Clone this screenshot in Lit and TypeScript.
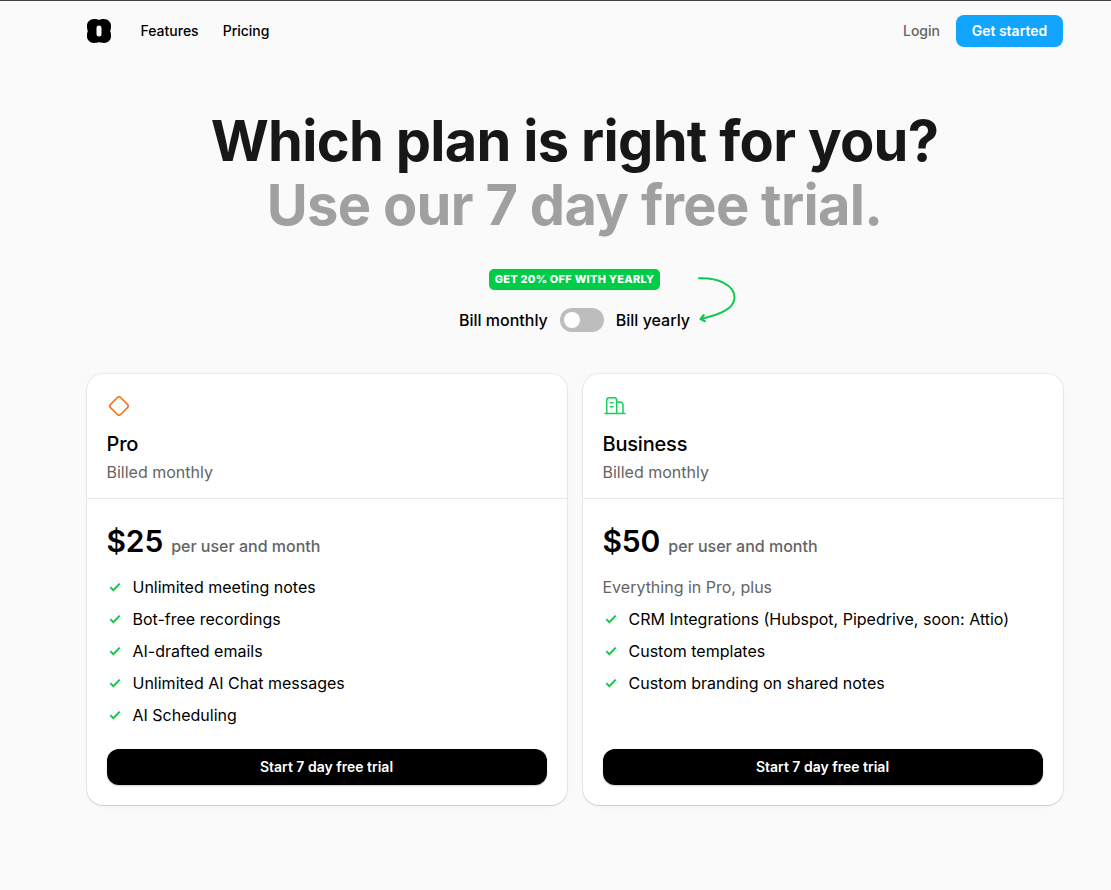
import { LitElement, html, css, svg, nothing } from "lit";
import { customElement, property, state } from "lit/decorators.js";

interface Plan {
  name: string;
  icon: "diamond" | "building";
  price: string;
  intro?: string;
  features: string[];
}

const plans: Plan[] = [
  {
    name: "Pro",
    icon: "diamond",
    price: "$25",
    features: [
      "Unlimited meeting notes",
      "Bot-free recordings",
      "AI-drafted emails",
      "Unlimited AI Chat messages",
      "AI Scheduling",
    ],
  },
  {
    name: "Business",
    icon: "building",
    price: "$50",
    intro: "Everything in Pro, plus",
    features: [
      "CRM Integrations (Hubspot, Pipedrive, soon: Attio)",
      "Custom templates",
      "Custom branding on shared notes",
    ],
  },
];

const icons = {
  diamond: svg`<rect x="4.8" y="4.8" width="14.4" height="14.4" rx="2.6" transform="rotate(45 12 12)" />`,
  building: svg`<path d="M2 19.500h20M3.700 19.500V6.200q0-2.500 2.500-2.500h5q2.500 0 2.500 2.500v13.300M13.700 8h3q3.300 0 3.300 3.200v8.300M7.400 8.800h2.600M7.400 12.700h2.600" />`,
};

@customElement("plan-card")
class PlanCard extends LitElement {
  static styles = css`
    :host {
      display: flex;
      flex-direction: column;
      background: #fff;
      border-radius: 16px;
      box-shadow: 0 0 0 1px rgba(0, 0, 0, 0.06), 0 1px 1px rgba(0, 0, 0, 0.1),
        0 2px 4px rgba(0, 0, 0, 0.03);
    }
    .head {
      padding: 20px 20px 13px;
      border-bottom: 1px solid #e8e8e8;
    }
    .icon {
      display: block;
      width: 24px;
      height: 24px;
      fill: none;
      stroke-width: 1.5;
      stroke-linecap: round;
      stroke-linejoin: round;
    }
    .diamond {
      stroke: #ff6600;
    }
    .building {
      stroke: #14cf58;
    }
    h2 {
      margin: 12px 0 0;
      font-size: 20px;
      font-weight: 500;
      line-height: 28px;
      letter-spacing: -0.01em;
    }
    .period {
      margin: 2px 0 0;
      color: #646464;
      line-height: 25px;
    }
    .body {
      display: flex;
      flex-direction: column;
      flex: 1;
      padding: 22px 20px 20px;
    }
    .price {
      display: flex;
      align-items: baseline;
      gap: 8px;
      height: 50px;
      line-height: 41px;
    }
    .amount {
      font-size: 30px;
      font-weight: 600;
      letter-spacing: -0.005em;
    }
    .unit {
      color: #646464;
      font-weight: 500;
    }
    ul {
      margin: 0;
      padding: 0;
      list-style: none;
    }
    li,
    .intro {
      display: flex;
      align-items: center;
      gap: 10px;
      height: 32px;
    }
    .intro {
      color: #646464;
    }
    .check {
      width: 16px;
      height: 16px;
      fill: none;
      stroke: #12c750;
      stroke-width: 2;
    }
    button {
      height: 36px;
      margin-top: auto;
      padding: 0 0 2px;
      border: 0;
      border-radius: 12px;
      background: #000;
      color: #fff;
      font: inherit;
      font-size: 14px;
      font-weight: 600;
      box-shadow: 0 1px 2px rgba(0, 0, 0, 0.2);
    }
  `;

  @property({ attribute: false }) plan!: Plan;
  @property({ type: Boolean }) yearly = false;

  render() {
    const { name, icon, price, intro, features } = this.plan;
    return html`
      <div class="head">
        <svg class="icon ${icon}" viewBox="0 0 24 24">${icons[icon]}</svg>
        <h2>${name}</h2>
        <p class="period">Billed ${this.yearly ? "yearly" : "monthly"}</p>
      </div>
      <div class="body">
        <div class="price">
          <span class="amount">${price}</span>
          <span class="unit">per user and month</span>
        </div>
        ${intro ? html`<div class="intro">${intro}</div>` : nothing}
        <ul>
          ${features.map(
            (feature) => html`
              <li>
                <svg class="check" viewBox="0 0 16 16">
                  <path d="M3.3 8.2L6.4 11.2L12.8 4.6" />
                </svg>
                <span>${feature}</span>
              </li>
            `
          )}
        </ul>
        <button>Start 7 day free trial</button>
      </div>
    `;
  }
}

@customElement("app-root")
class AppRoot extends LitElement {
  static styles = css`
    :host {
      display: block;
      box-sizing: border-box;
      height: 890px;
      padding: 0 48.5px 0 86.5px;
      border-top: 1px solid #3c4444;
      background: #fafafa;
      color: #000;
      font-family: Inter, sans-serif;
      font-size: 16px;
    }
    header {
      display: flex;
      align-items: center;
      height: 60px;
      margin-right: -0.5px;
      font-size: 14px;
      font-weight: 500;
    }
    .logo {
      width: 24px;
      height: 24px;
      margin-right: 30px;
    }
    nav {
      display: flex;
      flex: 1;
      gap: 24px;
      padding-bottom: 2px;
    }
    .login {
      margin-right: 16px;
      padding-bottom: 2px;
      color: #646464;
    }
    .start {
      width: 107px;
      height: 32px;
      padding: 0 0 2px;
      border: 0;
      border-radius: 8px;
      background: #12a5ff;
      color: #fff;
      font: inherit;
      font-weight: 600;
    }
    h1 {
      margin: 48px 0 0;
      color: #171717;
      font-size: 56px;
      font-weight: 700;
      line-height: 64px;
      letter-spacing: -0.7px;
      text-align: center;
    }
    h1 span {
      display: block;
      color: #a0a0a0;
    }
    .billing {
      display: flex;
      flex-direction: column;
      align-items: center;
      margin-top: 32px;
    }
    .offer {
      height: 21px;
      padding: 0 6px;
      border-radius: 5px;
      background: #00cc47;
      color: #fff;
      font-size: 11px;
      font-weight: 800;
      line-height: 21px;
      letter-spacing: 0.25px;
    }
    .choice {
      position: relative;
      display: flex;
      align-items: center;
      gap: 12px;
      height: 24px;
      margin-top: 18px;
      font-weight: 500;
    }
    .switch {
      display: flex;
      width: 44px;
      height: 24px;
      padding: 4px;
      box-sizing: border-box;
      border: 0;
      border-radius: 12px;
      background: #bdbdbd;
    }
    .switch.on {
      justify-content: flex-end;
      background: #00cc47;
    }
    .knob {
      width: 16px;
      height: 16px;
      border-radius: 50%;
      background: #fff;
    }
    .arrow {
      position: absolute;
      top: -38px;
      left: 100%;
      width: 50px;
      height: 56px;
      fill: none;
      stroke: #0acb4d;
      stroke-width: 2;
      stroke-linecap: round;
      stroke-linejoin: round;
    }
    .plans {
      display: grid;
      grid-template-columns: 1fr 1fr;
      gap: 16px;
      height: 431px;
      margin-top: 42px;
    }
  `;

  @state() private yearly = false;

  private toggle() {
    this.yearly = !this.yearly;
  }

  render() {
    return html`
      <header>
        <svg class="logo" viewBox="0 0 24 24">
          <path
            fill-rule="evenodd"
            d="M7 0C9 0 10.700 0.200 12 0.900C13.300 0.200 15 0 17 0C21 0 24 3 24 6.500C24 8.600 23.900 10.500 23.200 12C23.900 13.500 24 15.400 24 17.500C24 21 21 24 17 24C15 24 13.300 23.800 12 23.100C10.700 23.800 9 24 7 24C3 24 0 21 0 17.500C0 15.400 0.100 13.500 0.800 12C0.100 10.500 0 8.600 0 6.500C0 3 3 0 7 0ZM12 6.500A2.500 2.500 0 0 0 9.500 9V15A2.500 2.500 0 0 0 14.500 15V9A2.500 2.500 0 0 0 12 6.500Z"
          />
        </svg>
        <nav>
          <span>Features</span>
          <span>Pricing</span>
        </nav>
        <span class="login">Login</span>
        <button class="start">Get started</button>
      </header>
      <h1>Which plan is right for you?<span>Use our 7 day free trial.</span></h1>
      <div class="billing">
        <div class="offer">GET 20% OFF WITH YEARLY</div>
        <div class="choice">
          <span>Bill monthly</span>
          <button class="switch ${this.yearly ? "on" : ""}" @click=${this.toggle}>
            <span class="knob"></span>
          </button>
          <span>Bill yearly</span>
          <svg class="arrow" viewBox="0 0 50 56">
            <path d="M9 8.300C27 7.500 45 14.500 44.500 28C44 39 30 44.500 11 49M13.800 45L10.500 49L15 51.300" />
          </svg>
        </div>
      </div>
      <div class="plans">
        ${plans.map(
          (plan) => html`<plan-card .plan=${plan} ?yearly=${this.yearly}></plan-card>`
        )}
      </div>
    `;
  }
}
